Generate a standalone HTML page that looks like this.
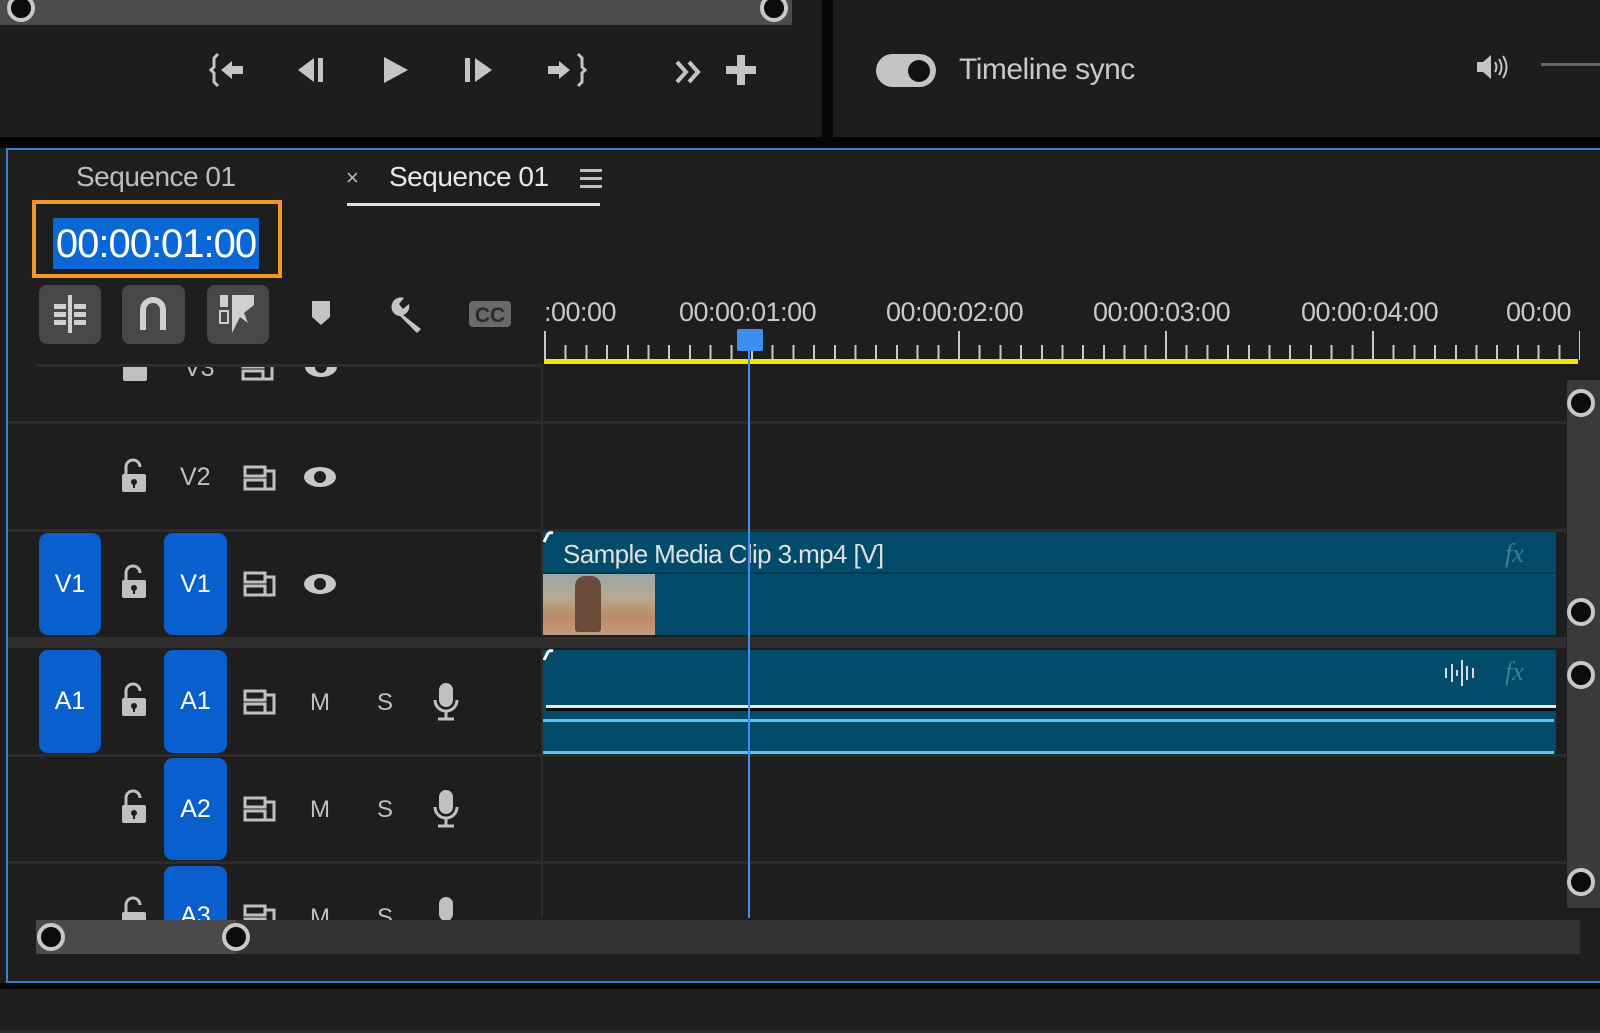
<!DOCTYPE html>
<html><head><meta charset="utf-8"><style>
*{margin:0;padding:0;box-sizing:border-box}
body{width:1600px;height:1033px;background:#1e1e1e;position:relative;overflow:hidden;font-family:"Liberation Sans",sans-serif;color:#bdbdbd}
.a{position:absolute}
.t{position:absolute;white-space:nowrap;line-height:1}
.btn{position:absolute;background:#0a5fcf;border-radius:9px;color:#fff;font-size:25px;display:flex;align-items:center;justify-content:center}
.tb{position:absolute;background:#484848;border-radius:8px}
.hl{position:absolute;left:8px;width:1558px;height:3px;background:#2c2c2c}
.knob{position:absolute;width:28px;height:28px;border-radius:50%;background:#0c0c0c;border:4px solid #c8c8c8}
svg{position:absolute;overflow:visible}
</style></head><body>
<div class="a" style="left:0;top:0;width:822px;height:137px;background:#1d1d1d"></div>
<div class="a" style="left:822px;top:0;width:11px;height:137px;background:#050505"></div>
<div class="a" style="left:833px;top:0;width:767px;height:137px;background:#1d1d1d"></div>
<div class="a" style="left:0;top:137px;width:1600px;height:11px;background:#050505"></div>
<div class="a" style="left:0;top:0;width:792px;height:25px;background:#4c4c4c"></div>
<div class="knob" style="left:7px;top:-6px"></div>
<div class="knob" style="left:760px;top:-6px"></div>
<svg style="left:210px;top:52px" width="40" height="36" viewBox="0 0 40 36" fill="#c4c4c4"><path d="M8 2 L4 6 V15 L1 18 L4 21 V30 L8 34" fill="none" stroke="#c4c4c4" stroke-width="3"/><path d="M11 18 L22 9 V14 H33 V22 H22 V27Z"/></svg>
<svg style="left:296px;top:55px" width="34" height="30" viewBox="0 0 34 30" fill="#c4c4c4"><path d="M2 15 L18 3 V27Z"/><rect x="22" y="3" width="5" height="24"/></svg>
<svg style="left:381px;top:55px" width="30" height="30" viewBox="0 0 30 30" fill="#c4c4c4"><path d="M3 2 L27 15 L3 28Z"/></svg>
<svg style="left:462px;top:55px" width="34" height="30" viewBox="0 0 34 30" fill="#c4c4c4"><rect x="3" y="3" width="5" height="24"/><path d="M13 3 L30 15 L13 27Z"/></svg>
<svg style="left:546px;top:52px" width="40" height="36" viewBox="0 0 40 36" fill="#c4c4c4"><path d="M2 14 H13 V9 L24 18 L13 27 V22 H2Z"/><path d="M32 2 L36 6 V15 L39 18 L36 21 V30 L32 34" fill="none" stroke="#c4c4c4" stroke-width="3"/></svg>
<svg style="left:674px;top:59px" width="30" height="26" viewBox="0 0 30 26" fill="none" stroke="#c4c4c4" stroke-width="4"><path d="M3 3 L12 13 L3 23 M15 3 L24 13 L15 23"/></svg>
<svg style="left:725px;top:54px" width="32" height="32" viewBox="0 0 32 32" fill="#c4c4c4"><rect x="12" y="1" width="8" height="30"/><rect x="1" y="12" width="30" height="8"/></svg>
<div class="a" style="left:876px;top:54px;width:60px;height:33px;border-radius:17px;background:#c4c4c4"></div>
<div class="a" style="left:908px;top:60px;width:22px;height:22px;border-radius:50%;background:#111"></div>
<div class="t" style="left:959px;top:55px;font-size:30px;color:#c8c8c8;letter-spacing:-0.5px">Timeline sync</div>
<svg style="left:1476px;top:54px" width="36" height="26" viewBox="0 0 36 26" fill="#c4c4c4"><path d="M1 8 H7 L15 1 V25 L7 18 H1Z"/><path d="M19 8 Q22 13 19 18 M23 5 Q28 13 23 21 M27 2 Q34 13 27 24" fill="none" stroke="#c4c4c4" stroke-width="2"/></svg>
<div class="a" style="left:1541px;top:63px;width:59px;height:3px;background:#666"></div>
<div class="a" style="left:6px;top:148px;width:1600px;height:835px;border:2px solid #3b7fd0;border-right:none;background:#1e1e1e"></div>
<div class="a" style="left:0;top:983px;width:1600px;height:6px;background:#080808"></div>
<div class="a" style="left:0;top:1030px;width:1600px;height:3px;background:#2a2a2a"></div>
<div class="t" style="left:76px;top:163px;font-size:28px;color:#bdbdbd;letter-spacing:-0.5px">Sequence 01</div>
<div class="t" style="left:346px;top:167px;font-size:22px;color:#bdbdbd">×</div>
<div class="t" style="left:389px;top:163px;font-size:28px;color:#e8e8e8;letter-spacing:-0.5px">Sequence 01</div>
<svg style="left:580px;top:168px" width="22" height="20" viewBox="0 0 22 20" fill="#bdbdbd"><rect y="1" width="22" height="3"/><rect y="9" width="22" height="3"/><rect y="17" width="22" height="3"/></svg>
<div class="a" style="left:347px;top:203px;width:253px;height:3px;background:#e0e0e0"></div>
<div class="a" style="left:32px;top:200px;width:250px;height:78px;border:4px solid #f0962a"></div>
<div class="a" style="left:53px;top:218px;width:206px;height:51px;background:#0a67d6"></div>
<div class="t" style="left:53px;top:224px;width:206px;text-align:center;font-size:40px;color:#fff;letter-spacing:-1px">00:00:01:00</div>
<div class="tb" style="left:39px;top:285px;width:62px;height:59px"></div>
<svg style="left:52px;top:295px" width="36" height="38" viewBox="0 0 36 38" fill="#d0d0d0"><rect x="16" y="0" width="4" height="38"/><rect x="2" y="9" width="12" height="5"/><rect x="22" y="9" width="12" height="5"/><rect x="2" y="17" width="12" height="5"/><rect x="22" y="17" width="12" height="5"/><rect x="2" y="25" width="12" height="5"/><rect x="22" y="25" width="12" height="5"/></svg>
<div class="tb" style="left:122px;top:285px;width:63px;height:59px"></div>
<svg style="left:138px;top:296px" width="30" height="34" viewBox="0 0 30 34" fill="none" stroke="#d0d0d0" stroke-width="6"><path d="M5 34 V14 A10 10 0 0 1 25 14 V34"/></svg>
<div class="tb" style="left:207px;top:285px;width:62px;height:59px"></div>
<svg style="left:218px;top:293px" width="40" height="42" viewBox="0 0 40 42" fill="#d0d0d0"><rect x="2" y="2" width="8" height="12"/><rect x="2" y="18" width="8" height="12" fill="none" stroke="#d0d0d0" stroke-width="2"/><path d="M14 2 L36 2 L36 12 L26 20 L30 30 L22 24 L14 40Z"/></svg>
<svg style="left:311px;top:300px" width="20" height="26" viewBox="0 0 20 26" fill="#c4c4c4"><path d="M1 1 H19 V17 L10 25 L1 17Z"/></svg>
<svg style="left:388px;top:296px" width="36" height="38" viewBox="0 0 36 38" fill="#c4c4c4"><path d="M4 8 A9 9 0 0 1 16 2 L11 8 L15 13 L21 8 A9 9 0 0 1 15 19 L33 33 L29 37 L12 20 A9 9 0 0 1 4 8Z"/></svg>
<svg style="left:468px;top:300px" width="44" height="28" viewBox="0 0 44 28"><rect x="1" y="1" width="42" height="26" rx="4" fill="#6a6a6a"/><text x="22" y="22" font-size="21" font-weight="bold" text-anchor="middle" fill="#2a2a2a" font-family="Liberation Sans">CC</text></svg>
<div class="t" style="left:544px;top:299px;font-size:27px;color:#c8c8c8;letter-spacing:-0.5px">:00:00</div>
<div class="t" style="left:679px;top:299px;font-size:27px;color:#c8c8c8;letter-spacing:-0.5px">00:00:01:00</div>
<div class="t" style="left:886px;top:299px;font-size:27px;color:#c8c8c8;letter-spacing:-0.5px">00:00:02:00</div>
<div class="t" style="left:1093px;top:299px;font-size:27px;color:#c8c8c8;letter-spacing:-0.5px">00:00:03:00</div>
<div class="t" style="left:1301px;top:299px;font-size:27px;color:#c8c8c8;letter-spacing:-0.5px">00:00:04:00</div>
<div class="t" style="left:1506px;top:299px;font-size:27px;color:#c8c8c8;letter-spacing:-0.5px">00:00</div>
<div class="a" style="left:544px;top:345px;width:1034px;height:15px;background:repeating-linear-gradient(90deg,#c8c8c8 0 2px,transparent 2px 20.7px)"></div>
<div class="a" style="left:544px;top:331px;width:1036px;height:29px;background:repeating-linear-gradient(90deg,#c8c8c8 0 2px,transparent 2px 207px)"></div>
<div class="a" style="left:544px;top:359px;width:1034px;height:5px;background:#f0e800"></div>
<div class="hl" style="top:364px;left:36px;width:505px"></div>
<div class="hl" style="top:421px"></div>
<div class="hl" style="top:529px"></div>
<div class="a" style="left:8px;top:637px;width:1558px;height:11px;background:#2e2e2e"></div>
<div class="hl" style="top:754px"></div>
<div class="hl" style="top:861px"></div>
<div class="a" style="left:541px;top:364px;width:2px;height:554px;background:#2c2c2c"></div>
<div class="a" style="left:8px;top:367px;width:533px;height:16px;overflow:hidden">
<svg style="left:113px;top:-10px" width="28" height="24" viewBox="0 0 28 24" fill="#c0c0c0"><rect x="2" y="8" width="24" height="16" rx="2"/></svg>
<div class="t" style="left:176px;top:-11px;font-size:25px">V3</div>
<svg style="left:233px;top:-10px" width="34" height="24" viewBox="0 0 34 24" fill="none" stroke="#c0c0c0" stroke-width="3"><rect x="2" y="2" width="20" height="8"/><rect x="2" y="14" width="20" height="8"/><path d="M22 6 H31 V22 H22"/></svg>
<svg style="left:296px;top:-11px" width="34" height="22" viewBox="0 0 34 22"><ellipse cx="17" cy="11" rx="16" ry="10" fill="#c8c8c8"/><circle cx="17" cy="11" r="6" fill="#1e1e1e"/></svg>
</div>
<svg style="left:120px;top:458px" width="28" height="36" viewBox="0 0 28 36" fill="#c0c0c0"><path d="M6 16 V9 A7 7 0 0 1 20 9" fill="none" stroke="#c0c0c0" stroke-width="3"/><rect x="2" y="16" width="24" height="18" rx="2"/><circle cx="14" cy="24" r="3" fill="#1e1e1e"/><rect x="13" y="24" width="2" height="6" fill="#1e1e1e"/></svg>
<div class="t" style="left:180px;top:465px;font-size:25px;color:#c0c0c0">V2</div>
<svg style="left:243px;top:465px" width="34" height="26" viewBox="0 0 34 26" fill="none" stroke="#c0c0c0" stroke-width="3"><rect x="2" y="2" width="20" height="9"/><rect x="2" y="15" width="20" height="9"/><path d="M22 6 H31 V24 H22"/></svg>
<svg style="left:303px;top:466px" width="34" height="22" viewBox="0 0 34 22"><ellipse cx="17" cy="11" rx="16" ry="10" fill="#c8c8c8"/><circle cx="17" cy="11" r="6" fill="#1e1e1e"/></svg>
<div class="btn" style="left:39px;top:533px;width:62px;height:102px">V1</div>
<svg style="left:120px;top:564px" width="28" height="36" viewBox="0 0 28 36" fill="#c0c0c0"><path d="M6 16 V9 A7 7 0 0 1 20 9" fill="none" stroke="#c0c0c0" stroke-width="3"/><rect x="2" y="16" width="24" height="18" rx="2"/><circle cx="14" cy="24" r="3" fill="#1e1e1e"/><rect x="13" y="24" width="2" height="6" fill="#1e1e1e"/></svg>
<div class="btn" style="left:164px;top:533px;width:63px;height:102px">V1</div>
<svg style="left:243px;top:571px" width="34" height="26" viewBox="0 0 34 26" fill="none" stroke="#c0c0c0" stroke-width="3"><rect x="2" y="2" width="20" height="9"/><rect x="2" y="15" width="20" height="9"/><path d="M22 6 H31 V24 H22"/></svg>
<svg style="left:303px;top:573px" width="34" height="22" viewBox="0 0 34 22"><ellipse cx="17" cy="11" rx="16" ry="10" fill="#c8c8c8"/><circle cx="17" cy="11" r="6" fill="#1e1e1e"/></svg>
<div class="btn" style="left:39px;top:650px;width:62px;height:103px">A1</div>
<svg style="left:120px;top:682px" width="28" height="36" viewBox="0 0 28 36" fill="#c0c0c0"><path d="M6 16 V9 A7 7 0 0 1 20 9" fill="none" stroke="#c0c0c0" stroke-width="3"/><rect x="2" y="16" width="24" height="18" rx="2"/><circle cx="14" cy="24" r="3" fill="#1e1e1e"/><rect x="13" y="24" width="2" height="6" fill="#1e1e1e"/></svg>
<div class="btn" style="left:164px;top:650px;width:63px;height:103px">A1</div>
<svg style="left:243px;top:689px" width="34" height="26" viewBox="0 0 34 26" fill="none" stroke="#c0c0c0" stroke-width="3"><rect x="2" y="2" width="20" height="9"/><rect x="2" y="15" width="20" height="9"/><path d="M22 6 H31 V24 H22"/></svg>
<div class="t" style="left:310px;top:691px;font-size:24px;color:#c0c0c0">M</div>
<div class="t" style="left:377px;top:691px;font-size:24px;color:#c0c0c0">S</div>
<svg style="left:432px;top:682px" width="28" height="40" viewBox="0 0 28 40" fill="#c0c0c0"><rect x="7" y="1" width="14" height="24" rx="7"/><path d="M3 18 A11 11 0 0 0 25 18 M14 29 V36 M6 37 H22" fill="none" stroke="#c0c0c0" stroke-width="3"/></svg>
<svg style="left:120px;top:789px" width="28" height="36" viewBox="0 0 28 36" fill="#c0c0c0"><path d="M6 16 V9 A7 7 0 0 1 20 9" fill="none" stroke="#c0c0c0" stroke-width="3"/><rect x="2" y="16" width="24" height="18" rx="2"/><circle cx="14" cy="24" r="3" fill="#1e1e1e"/><rect x="13" y="24" width="2" height="6" fill="#1e1e1e"/></svg>
<div class="btn" style="left:164px;top:758px;width:63px;height:102px">A2</div>
<svg style="left:243px;top:796px" width="34" height="26" viewBox="0 0 34 26" fill="none" stroke="#c0c0c0" stroke-width="3"><rect x="2" y="2" width="20" height="9"/><rect x="2" y="15" width="20" height="9"/><path d="M22 6 H31 V24 H22"/></svg>
<div class="t" style="left:310px;top:798px;font-size:24px;color:#c0c0c0">M</div>
<div class="t" style="left:377px;top:798px;font-size:24px;color:#c0c0c0">S</div>
<svg style="left:432px;top:789px" width="28" height="40" viewBox="0 0 28 40" fill="#c0c0c0"><rect x="7" y="1" width="14" height="24" rx="7"/><path d="M3 18 A11 11 0 0 0 25 18 M14 29 V36 M6 37 H22" fill="none" stroke="#c0c0c0" stroke-width="3"/></svg>
<div class="a" style="left:0;top:864px;width:541px;height:56px;overflow:hidden">
<svg style="left:120px;top:32px" width="28" height="36" viewBox="0 0 28 36" fill="#c0c0c0"><path d="M6 16 V9 A7 7 0 0 1 20 9" fill="none" stroke="#c0c0c0" stroke-width="3"/><rect x="2" y="16" width="24" height="18" rx="2"/></svg>
<div class="btn" style="left:164px;top:2px;width:63px;height:90px;padding-top:10px">A3</div>
<svg style="left:243px;top:40px" width="34" height="26" viewBox="0 0 34 26" fill="none" stroke="#c0c0c0" stroke-width="3"><rect x="2" y="2" width="20" height="9"/><rect x="2" y="15" width="20" height="9"/><path d="M22 6 H31 V24 H22"/></svg>
<div class="t" style="left:310px;top:42px;font-size:24px;color:#c0c0c0">M</div>
<div class="t" style="left:377px;top:42px;font-size:24px;color:#c0c0c0">S</div>
<svg style="left:432px;top:32px" width="28" height="40" viewBox="0 0 28 40" fill="#c0c0c0"><rect x="7" y="1" width="14" height="24" rx="7"/></svg>
</div>
<div class="a" style="left:543px;top:532px;width:1013px;height:103px;background:#024b6a"></div>
<div class="a" style="left:543px;top:572px;width:1013px;height:2px;background:#013a55"></div>
<div class="t" style="left:563px;top:541px;font-size:26px;color:#e0e0e0;letter-spacing:-0.6px">Sample Media Clip 3.mp4 [V]</div>
<div class="t" style="left:1505px;top:541px;font-size:26px;font-style:italic;color:#3f7f99;font-family:'Liberation Serif',serif">fx</div>
<div class="a" style="left:543px;top:574px;width:112px;height:61px;background:linear-gradient(180deg,#9aa8a8 0%,#b9a890 40%,#b98a6a 70%,#c49a80 100%)"></div>
<div class="a" style="left:575px;top:576px;width:26px;height:56px;background:#6a4a38;border-radius:10px 10px 3px 3px"></div>
<div class="a" style="left:543px;top:650px;width:1013px;height:103px;background:#024b6a"></div>
<div class="a" style="left:546px;top:705px;width:1010px;height:3px;background:#e8e8e8"></div>
<div class="a" style="left:546px;top:708px;width:1010px;height:3px;background:#0a0a0a"></div>
<div class="a" style="left:543px;top:719px;width:1011px;height:3px;background:#5cc0f0"></div>
<div class="a" style="left:543px;top:751px;width:1011px;height:3px;background:#5cc0f0"></div>
<svg style="left:1444px;top:658px" width="32" height="30" viewBox="0 0 32 30" fill="none" stroke="#d8d8d8" stroke-width="2"><path d="M2 10 V20 M8 6 V24 M13 12 V18 M18 2 V28 M23 8 V22 M29 10 V20"/></svg>
<div class="t" style="left:1505px;top:659px;font-size:26px;font-style:italic;color:#3f7f99;font-family:'Liberation Serif',serif">fx</div>
<svg style="left:544px;top:532px" width="10" height="10"><path d="M0 10 L4 2 Q6 0 9 1" stroke="#fff" stroke-width="3" fill="none"/></svg>
<svg style="left:544px;top:650px" width="10" height="10"><path d="M0 10 L4 2 Q6 0 9 1" stroke="#fff" stroke-width="3" fill="none"/></svg>
<div class="a" style="left:748px;top:340px;width:2px;height:578px;background:#3d8ef0"></div>
<div class="a" style="left:737px;top:329px;width:26px;height:22px;background:#3d8ef0;border-radius:2px"></div>
<div class="a" style="left:1567px;top:380px;width:33px;height:528px;background:#3a3a3a"></div>
<div class="knob" style="left:1567px;top:389px"></div>
<div class="knob" style="left:1567px;top:598px"></div>
<div class="knob" style="left:1567px;top:661px"></div>
<div class="knob" style="left:1567px;top:868px"></div>
<div class="a" style="left:36px;top:920px;width:1544px;height:34px;background:#333"></div>
<div class="a" style="left:36px;top:920px;width:200px;height:34px;background:#4a4a4a"></div>
<div class="knob" style="left:37px;top:923px"></div>
<div class="knob" style="left:222px;top:923px"></div>
</body></html>
